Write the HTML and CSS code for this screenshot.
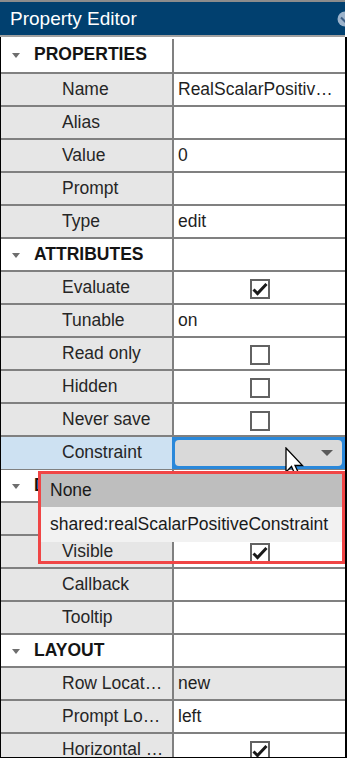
FILE: index.html
```html
<!DOCTYPE html>
<html lang="en">
<head>
    <meta charset="UTF-8">
    <meta name="viewport" content="width=device-width, initial-scale=1.0">
    <title>Property Editor</title>
    <link rel="stylesheet" href="styles.css">
</head>
<body>
    <div class="editor">
        <header class="title-bar">
            <h1>Property Editor</h1>
            <svg class="collapse-icon" width="16" height="16" viewBox="0 0 16 16">
                <circle cx="8" cy="8" r="7.5" fill="#9cb3cb"/>
                <path d="M4 6.5 L8 10.5 L12 6.5" fill="none" stroke="#3d5f86" stroke-width="2"/>
            </svg>
        </header>

        <div class="grid">
            <div class="row section">
                <div class="cell name"><span class="caret"></span>PROPERTIES</div>
                <div class="cell value"></div>
            </div>
            <div class="row">
                <div class="cell name">Name</div>
                <div class="cell value">RealScalarPositiveConstraint</div>
            </div>
            <div class="row">
                <div class="cell name">Alias</div>
                <div class="cell value"></div>
            </div>
            <div class="row">
                <div class="cell name">Value</div>
                <div class="cell value">0</div>
            </div>
            <div class="row">
                <div class="cell name">Prompt</div>
                <div class="cell value"></div>
            </div>
            <div class="row">
                <div class="cell name">Type</div>
                <div class="cell value">edit</div>
            </div>

            <div class="row section">
                <div class="cell name"><span class="caret"></span>ATTRIBUTES</div>
                <div class="cell value"></div>
            </div>
            <div class="row">
                <div class="cell name">Evaluate</div>
                <div class="cell value center"><span class="check checked"><svg viewBox="0 0 16 16"><path d="M1.5 8.5 L5.5 12.5 L14.5 3"/></svg></span></div>
            </div>
            <div class="row">
                <div class="cell name">Tunable</div>
                <div class="cell value">on</div>
            </div>
            <div class="row">
                <div class="cell name">Read only</div>
                <div class="cell value center"><span class="check"></span></div>
            </div>
            <div class="row">
                <div class="cell name">Hidden</div>
                <div class="cell value center"><span class="check"></span></div>
            </div>
            <div class="row">
                <div class="cell name">Never save</div>
                <div class="cell value center"><span class="check"></span></div>
            </div>
            <div class="row selected">
                <div class="cell name">Constraint</div>
                <div class="cell value center">
                    <div class="dropdown"><div class="dropdown-face"><span class="dropdown-arrow"></span></div></div>
                </div>
            </div>

            <div class="row section">
                <div class="cell name"><span class="caret"></span>DIALOG</div>
                <div class="cell value"></div>
            </div>
            <div class="row">
                <div class="cell name">Enable</div>
                <div class="cell value center"><span class="check checked"><svg viewBox="0 0 16 16"><path d="M1.5 8.5 L5.5 12.5 L14.5 3"/></svg></span></div>
            </div>
            <div class="row">
                <div class="cell name">Visible</div>
                <div class="cell value center"><span class="check checked"><svg viewBox="0 0 16 16"><path d="M1.5 8.5 L5.5 12.5 L14.5 3"/></svg></span></div>
            </div>
            <div class="row">
                <div class="cell name">Callback</div>
                <div class="cell value"></div>
            </div>
            <div class="row">
                <div class="cell name">Tooltip</div>
                <div class="cell value"></div>
            </div>

            <div class="row section">
                <div class="cell name"><span class="caret"></span>LAYOUT</div>
                <div class="cell value"></div>
            </div>
            <div class="row">
                <div class="cell name">Row Location</div>
                <div class="cell value readonly">new</div>
            </div>
            <div class="row">
                <div class="cell name">Prompt Location</div>
                <div class="cell value">left</div>
            </div>
            <div class="row">
                <div class="cell name">Horizontal stretch</div>
                <div class="cell value center"><span class="check checked"><svg viewBox="0 0 16 16"><path d="M1.5 8.5 L5.5 12.5 L14.5 3"/></svg></span></div>
            </div>
        </div>

        <!-- pointer sits under the open list -->
        <svg class="cursor" width="19" height="30" viewBox="0 0 19 30">
            <path d="M1 1 L1 25 L6.5 19.5 L10.5 28.5 L14 27 L10 18.5 L17.5 18.5 Z" fill="#fff" stroke="#000" stroke-width="1.3" stroke-linejoin="miter"/>
        </svg>

        <div class="popup">
            <div class="menu">
                <div class="menu-item active">None</div>
                <div class="menu-item">shared:realScalarPositiveConstraint</div>
            </div>
        </div>
    </div>
</body>
</html>
```

FILE: styles.css
```css
body {
    margin: 0;
    padding: 0;
    background: #fff;
}

.editor {
    position: relative;
    width: 347px;
    height: 760px;
    overflow: hidden;
    font-family: 'Liberation Sans', Arial, sans-serif;
    font-size: 17.5px;
    color: #262626;
}

.title-bar {
    position: relative;
    display: flex;
    align-items: center;
    width: 345px;
    height: 37px;
    box-sizing: border-box;
    border-top: 2px solid #8c8c8c;
    border-bottom: 2px solid #a0a0a0;
    background: #01406f;
    overflow: hidden;
}

.title-bar h1 {
    margin: 0 0 0 10px;
    font-size: 19px;
    font-weight: normal;
    color: #fff;
}

.collapse-icon {
    position: absolute;
    right: -8px;
    top: 9px;
}

.grid {
    height: 721px;
    box-sizing: border-box;
    padding-top: 2px;
    border-left: 1px solid #000;
    border-right: 2px solid #000;
    border-bottom: 1px solid #000;
    overflow: hidden;
}

.row {
    display: grid;
    grid-template-columns: 173px 1fr;
    height: 33px;
    box-sizing: border-box;
    border-bottom: 2px solid #808080;
}

.row:first-child {
    height: 35px;
}

.cell {
    line-height: 31px;
    white-space: nowrap;
    overflow: hidden;
    text-overflow: ellipsis;
}

.cell.name {
    background: #e6e6e6;
    border-right: 2px solid #808080;
    padding: 0 8px 0 61px;
}

.cell.value {
    background: #fff;
    padding: 0 8px 0 4px;
    color: #1f1f1f;
}

.cell.value.readonly {
    background: #e6e6e6;
}

.cell.center {
    display: flex;
    align-items: center;
    justify-content: center;
    padding: 0;
    overflow: visible;
}

.section .cell.name {
    background: #fff;
    padding-left: 11px;
    font-weight: bold;
    color: #141414;
}

.caret {
    display: inline-block;
    width: 0;
    height: 0;
    margin-right: 14px;
    vertical-align: middle;
    border-left: 4.5px solid transparent;
    border-right: 4.5px solid transparent;
    border-top: 5px solid #6e6e6e;
}

.selected .cell.name {
    background: #cde1f2;
}

.check {
    display: block;
    width: 20px;
    height: 20px;
    box-sizing: border-box;
    border: 2px solid #626262;
    background: #fff;
    margin-top: 2px;
}

.check svg {
    display: block;
    width: 16px;
    height: 16px;
    overflow: visible;
}

.check svg path {
    fill: none;
    stroke: #1a1a1a;
    stroke-width: 3;
}

.dropdown {
    width: calc(100% + 2px);
    height: 32px;
    margin-left: -2px;
    box-sizing: border-box;
    border: 3px solid #2a88da;
    background: #2a88da;
}

.dropdown-face {
    display: flex;
    align-items: center;
    justify-content: flex-end;
    height: 100%;
    background: #d9d9d9;
    border-radius: 4px;
}

.dropdown-arrow {
    width: 0;
    height: 0;
    margin-right: 9px;
    border-left: 6px solid transparent;
    border-right: 6px solid transparent;
    border-top: 6px solid #5a5a5a;
}

.cursor {
    position: absolute;
    left: 285px;
    top: 447px;
}

.popup {
    position: absolute;
    left: 38px;
    top: 471px;
    width: 307px;
    height: 93px;
    box-sizing: border-box;
    border: 3px solid #f04545;
}

.menu-item {
    padding-left: 9px;
    background: #f2f2f2;
    color: #1a1a1a;
    line-height: 35px;
    white-space: nowrap;
}

.menu-item.active {
    background: #bebebe;
    line-height: 33px;
}
```
